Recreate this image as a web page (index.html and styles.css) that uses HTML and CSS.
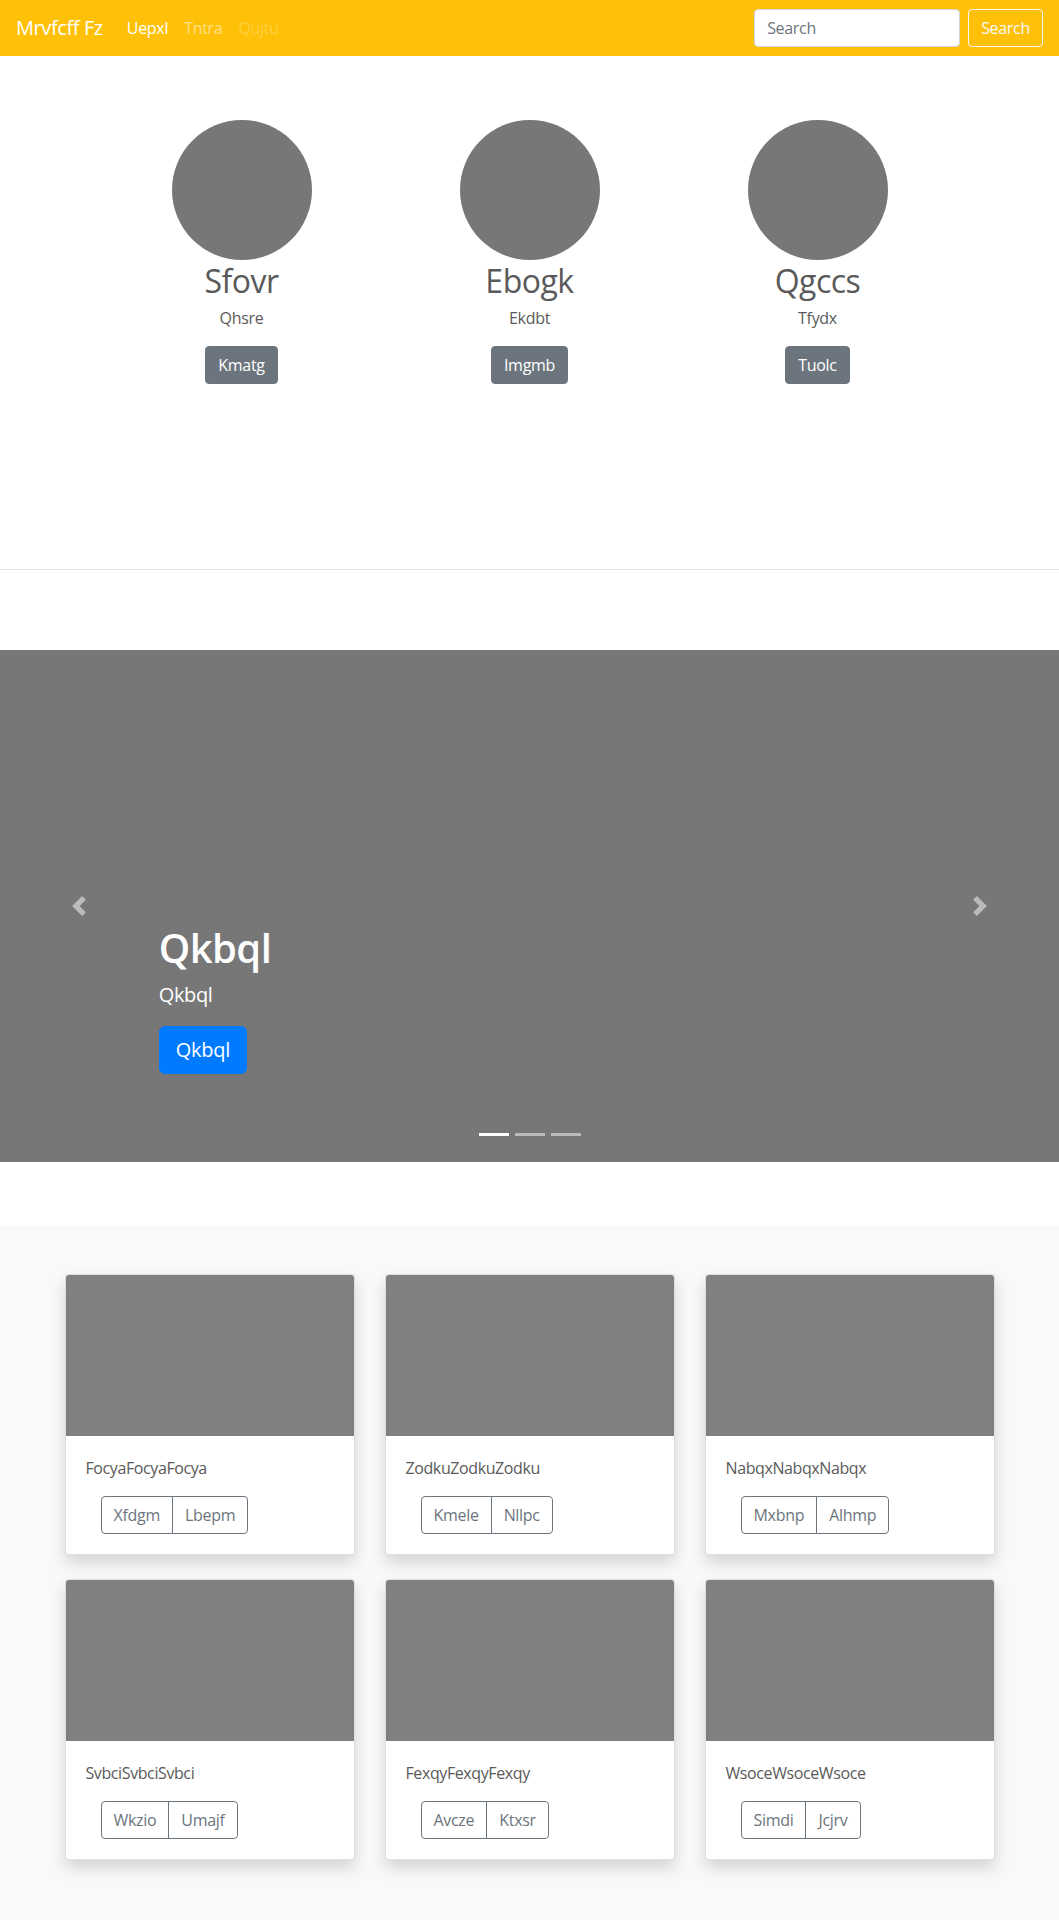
FILE: index.html
```html
<!DOCTYPE html>
<html lang="en">
<head>
<meta charset="utf-8">
<title>Mrvfcff Fz</title>
<link rel="stylesheet" href="styles.css">
</head>
<body>
<nav class="navbar">
  <a class="brand" href="#">Mrvfcff Fz</a>
  <ul class="nav">
    <li><a class="nav-link active" href="#">Uepxl</a></li>
    <li><a class="nav-link" href="#">Tntra</a></li>
    <li><a class="nav-link disabled" href="#">Qujtu</a></li>
  </ul>
  <form class="search">
    <input class="search-input" type="text" placeholder="Search">
    <button class="btn btn-outline-light" type="button">Search</button>
  </form>
</nav>

<section class="marketing">
  <div class="feature">
    <div class="circle"></div>
    <h2 class="feature-title">Sfovr</h2>
    <p class="feature-text">Qhsre</p>
    <p class="feature-action"><a class="btn btn-secondary" href="#">Kmatg</a></p>
  </div>
  <div class="feature">
    <div class="circle"></div>
    <h2 class="feature-title">Ebogk</h2>
    <p class="feature-text">Ekdbt</p>
    <p class="feature-action"><a class="btn btn-secondary" href="#">Imgmb</a></p>
  </div>
  <div class="feature">
    <div class="circle"></div>
    <h2 class="feature-title">Qgccs</h2>
    <p class="feature-text">Tfydx</p>
    <p class="feature-action"><a class="btn btn-secondary" href="#">Tuolc</a></p>
  </div>
</section>

<hr class="divider">

<section class="carousel">
  <ol class="indicators">
    <li class="indicator active"></li>
    <li class="indicator"></li>
    <li class="indicator"></li>
  </ol>
  <div class="caption">
    <h1 class="caption-title">Qkbql</h1>
    <p class="caption-text">Qkbql</p>
    <p class="caption-action"><a class="btn btn-primary btn-lg" href="#">Qkbql</a></p>
  </div>
  <a class="control control-prev" href="#">
    <svg class="control-icon" viewBox="0 0 8 8" width="20" height="20"><path fill="#fff" d="M5.25 0l-4 4 4 4 1.5-1.5L4.25 4l2.5-2.5L5.25 0z"/></svg>
  </a>
  <a class="control control-next" href="#">
    <svg class="control-icon" viewBox="0 0 8 8" width="20" height="20"><path fill="#fff" d="M2.75 0l-1.5 1.5L3.75 4l-2.5 2.5L2.75 8l4-4-4-4z"/></svg>
  </a>
</section>

<section class="album">
  <div class="album-grid">
    <div class="card">
      <div class="card-img"></div>
      <div class="card-body">
        <p class="card-text">FocyaFocyaFocya</p>
        <div class="btn-group"><a class="btn btn-outline-secondary" href="#">Xfdgm</a><a class="btn btn-outline-secondary" href="#">Lbepm</a></div>
      </div>
    </div>
    <div class="card">
      <div class="card-img"></div>
      <div class="card-body">
        <p class="card-text">ZodkuZodkuZodku</p>
        <div class="btn-group"><a class="btn btn-outline-secondary" href="#">Kmele</a><a class="btn btn-outline-secondary" href="#">Nllpc</a></div>
      </div>
    </div>
    <div class="card">
      <div class="card-img"></div>
      <div class="card-body">
        <p class="card-text">NabqxNabqxNabqx</p>
        <div class="btn-group"><a class="btn btn-outline-secondary" href="#">Mxbnp</a><a class="btn btn-outline-secondary" href="#">Alhmp</a></div>
      </div>
    </div>
    <div class="card">
      <div class="card-img"></div>
      <div class="card-body">
        <p class="card-text">SvbciSvbciSvbci</p>
        <div class="btn-group"><a class="btn btn-outline-secondary" href="#">Wkzio</a><a class="btn btn-outline-secondary" href="#">Umajf</a></div>
      </div>
    </div>
    <div class="card">
      <div class="card-img"></div>
      <div class="card-body">
        <p class="card-text">FexqyFexqyFexqy</p>
        <div class="btn-group"><a class="btn btn-outline-secondary" href="#">Avcze</a><a class="btn btn-outline-secondary" href="#">Ktxsr</a></div>
      </div>
    </div>
    <div class="card">
      <div class="card-img"></div>
      <div class="card-body">
        <p class="card-text">WsoceWsoceWsoce</p>
        <div class="btn-group"><a class="btn btn-outline-secondary" href="#">Simdi</a><a class="btn btn-outline-secondary" href="#">Jcjrv</a></div>
      </div>
    </div>
  </div>
</section>
</body>
</html>
```

FILE: styles.css
```css
* { box-sizing: border-box; }

html, body {
  margin: 0;
  padding: 0;
}

body {
  font-family: "Open Sans", "Noto Sans", "Liberation Sans", sans-serif;
  font-size: 16px;
  line-height: 1.5;
  color: #5a5a5a;
  background: #fff;
}

a { text-decoration: none; }

/* Navbar */
.navbar {
  display: flex;
  align-items: center;
  height: 56px;
  padding: 8px 16px;
  background: #ffc107;
}

.brand {
  font-size: 20px;
  line-height: 30px;
  padding: 5px 0;
  margin-right: 16px;
  color: #fff;
  letter-spacing: -0.4px;
}

.nav {
  display: flex;
  list-style: none;
  margin: 0;
  padding: 0;
  flex: 1;
}

.nav-link {
  display: block;
  padding: 8px;
  color: rgba(255, 255, 255, 0.5);
  letter-spacing: -0.3px;
}

.nav-link.active { color: #fff; }
.nav-link.disabled { color: rgba(255, 255, 255, 0.25); }

.search {
  display: flex;
  align-items: center;
}

.search-input {
  width: 206px;
  height: 38px;
  padding: 6px 12px;
  margin-right: 8px;
  font-family: inherit;
  font-size: 16px;
  color: #495057;
  background: #fff;
  border: 1px solid #ced4da;
  border-radius: 4px;
  letter-spacing: -0.3px;
}

.search-input::placeholder { color: #6c757d; }

/* Buttons */
.btn {
  display: inline-block;
  font-family: inherit;
  font-size: 16px;
  line-height: 24px;
  padding: 6px 12px;
  border: 1px solid transparent;
  border-radius: 4px;
  background: transparent;
  letter-spacing: -0.3px;
  text-align: center;
  vertical-align: middle;
}

.btn-outline-light {
  color: #f8f9fa;
  border-color: #f8f9fa;
}

.btn-secondary {
  color: #fff;
  background: #6c757d;
  border-color: #6c757d;
}

.btn-primary {
  color: #fff;
  background: #007bff;
  border-color: #007bff;
}

.btn-lg {
  font-size: 20px;
  line-height: 30px;
  padding: 8px 16px;
  border-radius: 6px;
}

.btn-outline-secondary {
  color: #6c757d;
  border-color: #6c757d;
}

/* Marketing */
.marketing {
  display: grid;
  grid-template-columns: repeat(3, 288px);
  justify-content: center;
  padding: 64px 0 105px;
  text-align: center;
}

.circle {
  width: 140px;
  height: 140px;
  margin: 0 auto;
  border-radius: 50%;
  background: #777;
}

.feature-title {
  margin: 2px 0 6px;
  font-size: 32px;
  font-weight: 400;
  line-height: 1.2;
  letter-spacing: -0.5px;
}

.feature-text {
  margin: 0 0 16px;
  letter-spacing: -0.3px;
}

.feature-action { margin: 0; }

.divider {
  margin: 80px 0;
  border: 0;
  border-top: 1px solid rgba(0, 0, 0, 0.1);
  height: 0;
}

/* Carousel */
.carousel {
  position: relative;
  height: 512px;
  margin-bottom: 64px;
  background: #777;
}

.caption {
  position: absolute;
  left: 15%;
  right: 15%;
  bottom: 52px;
  padding: 20px 0;
  color: #fff;
  z-index: 10;
}

.caption-title {
  margin: 0 0 8px;
  font-size: 40px;
  font-weight: 600;
  line-height: 1.2;
  letter-spacing: -0.6px;
}

.caption-text {
  margin: 0 0 16px;
  font-size: 20px;
  line-height: 30px;
  letter-spacing: -0.4px;
}

.caption-action { margin: 0 0 16px; }

.control {
  position: absolute;
  top: 0;
  bottom: 0;
  width: 15%;
  display: flex;
  align-items: center;
  justify-content: center;
  opacity: 0.5;
}

.control-prev { left: 0; }
.control-next { right: 0; }

.control-icon { display: block; }

.indicators {
  position: absolute;
  left: 0;
  right: 0;
  bottom: 0;
  margin: 0 15% 16px;
  padding: 0;
  list-style: none;
  display: flex;
  justify-content: center;
  z-index: 15;
}

.indicator {
  width: 30px;
  height: 3px;
  margin: 10px 3px;
  background: rgba(255, 255, 255, 0.5);
}

.indicator.active { background: #fff; }

/* Album */
.album {
  background: #f8f9fa;
  padding: 48px 0 72px;
}

.album-grid {
  width: 930px;
  margin: 0 auto;
  display: grid;
  grid-template-columns: repeat(3, 1fr);
  column-gap: 30px;
  row-gap: 24px;
}

.card {
  background: #fff;
  border: 1px solid rgba(0, 0, 0, 0.125);
  border-radius: 4px;
  box-shadow: 0 8px 16px rgba(0, 0, 0, 0.15);
  overflow: hidden;
}

.card-img {
  height: 161px;
  background: #808080;
}

.card-body {
  padding: 20px;
}

.card-text {
  margin: 0 0 16px;
  letter-spacing: -0.4px;
}

.btn-group {
  display: inline-flex;
  margin-left: 15px;
}

.btn-group .btn:first-child {
  border-top-right-radius: 0;
  border-bottom-right-radius: 0;
}

.btn-group .btn:last-child {
  margin-left: -1px;
  border-top-left-radius: 0;
  border-bottom-left-radius: 0;
}
```
